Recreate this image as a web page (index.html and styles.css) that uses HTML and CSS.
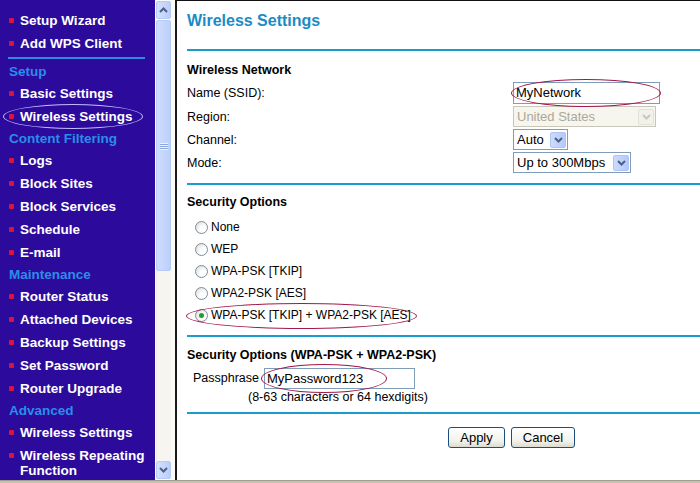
FILE: index.html
```html
<!DOCTYPE html>
<html>
<head>
<title>Wireless Settings</title>
<link rel="stylesheet" href="styles.css">
</head>
<body>
<div class="window">
<div class="frame">

<div class="menu">
<div class="menu-list">
<div class="item"><span class="dot"></span>Setup Wizard</div>
<div class="item"><span class="dot"></span>Add WPS Client</div>
<div class="sep"></div>
<div class="group">Setup</div>
<div class="item"><span class="dot"></span>Basic Settings</div>
<div class="item circled-menu"><span class="dot"></span>Wireless Settings</div>
<div class="group">Content Filtering</div>
<div class="item"><span class="dot"></span>Logs</div>
<div class="item"><span class="dot"></span>Block Sites</div>
<div class="item"><span class="dot"></span>Block Services</div>
<div class="item"><span class="dot"></span>Schedule</div>
<div class="item"><span class="dot"></span>E-mail</div>
<div class="group">Maintenance</div>
<div class="item"><span class="dot"></span>Router Status</div>
<div class="item"><span class="dot"></span>Attached Devices</div>
<div class="item"><span class="dot"></span>Backup Settings</div>
<div class="item"><span class="dot"></span>Set Password</div>
<div class="item"><span class="dot"></span>Router Upgrade</div>
<div class="group">Advanced</div>
<div class="item"><span class="dot"></span>Wireless Settings</div>
<div class="item"><span class="dot"></span>Wireless Repeating Function</div>
</div>

<div class="scroll">
<div class="sb-btn"><svg width="9" height="6" viewBox="0 0 9 6"><path d="M1 5 L4.5 1.5 L8 5" fill="none" stroke="#4d6185" stroke-width="2"/></svg></div>
<div class="sb-thumb">
<svg width="8" height="8" viewBox="0 0 8 8"><path d="M0 1.5h8M0 3.5h8M0 5.5h8M0 7.5h8" stroke="#eef3fe" stroke-width="1"/><path d="M0 2.5h8M0 4.5h8M0 6.5h8" stroke="#8ca7e0" stroke-width="1"/></svg>
</div>
<div class="sb-track"></div>
<div class="sb-btn"><svg width="9" height="6" viewBox="0 0 9 6"><path d="M1 1 L4.5 4.5 L8 1" fill="none" stroke="#4d6185" stroke-width="2"/></svg></div>
</div>
</div>

<div class="main">
<div class="title">Wireless Settings</div>
<div class="rule"></div>

<div class="sec-title first">Wireless Network</div>
<div class="form-row tall">
<span class="lbl">Name (SSID):</span>
<span class="field mark-name"><input class="text name-input" type="text" value="MyNetwork"></span>
</div>
<div class="form-row">
<span class="lbl">Region:</span>
<span class="select disabled region"><span class="sel-text">United States</span><span class="arrow"><svg width="9" height="6" viewBox="0 0 9 6"><path d="M1 1 L4.5 4.5 L8 1" fill="none" stroke="#c9c7ba" stroke-width="2"/></svg></span></span>
</div>
<div class="form-row">
<span class="lbl">Channel:</span>
<span class="select channel"><span class="sel-text">Auto</span><span class="arrow"><svg width="9" height="6" viewBox="0 0 9 6"><path d="M1 1 L4.5 4.5 L8 1" fill="none" stroke="#4d6185" stroke-width="2"/></svg></span></span>
</div>
<div class="form-row">
<span class="lbl">Mode:</span>
<span class="select mode"><span class="sel-text">Up to 300Mbps</span><span class="arrow"><svg width="9" height="6" viewBox="0 0 9 6"><path d="M1 1 L4.5 4.5 L8 1" fill="none" stroke="#4d6185" stroke-width="2"/></svg></span></span>
</div>
<div class="rule rule-mid"></div>

<div class="sec-title second">Security Options</div>
<div class="radios">
<label class="radio-row"><span class="radio"></span>None</label>
<label class="radio-row"><span class="radio"></span>WEP</label>
<label class="radio-row"><span class="radio"></span>WPA-PSK [TKIP]</label>
<label class="radio-row"><span class="radio"></span>WPA2-PSK [AES]</label>
<label class="radio-row mark-radio"><span class="radio checked"></span>WPA-PSK [TKIP] + WPA2-PSK [AES]</label>
</div>
<div class="rule rule-mid"></div>

<div class="sec-title">Security Options (WPA-PSK + WPA2-PSK)</div>
<div class="pass-row">
<span class="pass-lbl">Passphrase</span>
<span class="field mark-pass"><input class="text pass-input" type="text" value="MyPassword123"></span>
</div>
<div class="hint">(8-63 characters or 64 hexdigits)</div>
<div class="rule rule-low"></div>

<div class="buttons">
<button class="btn apply">Apply</button>
<button class="btn cancel">Cancel</button>
</div>
</div>

</div>
<div class="statusbar"></div>
</div>
</body>
</html>
```

FILE: styles.css
```css
body {
margin: 0;
font-family: "Liberation Sans", Arial, sans-serif;
font-size: 13px;
color: #000;
background: #fff;
}

.window {
width: 700px;
height: 483px;
overflow: hidden;
}

.frame {
display: flex;
height: 480px;
}

/* left menu frame */
.menu {
display: flex;
flex: none;
}

.menu-list {
width: 155px;
background-color: #2c0b9c;
padding-top: 9px;
box-sizing: border-box;
}

.item {
display: flex;
padding: 4px 4px 4px 9px;
line-height: 15px;
color: #fff;
font-weight: bold;
font-size: 13.5px;
position: relative;
}

.dot {
flex: none;
width: 5px;
height: 5px;
margin: 5px 6px 0 0;
background-color: #d8153e;
border-radius: 1px;
}

.group {
padding-left: 9px;
height: 21px;
line-height: 21px;
color: #2a8ee8;
font-weight: bold;
font-size: 13.5px;
}

.sep {
height: 2px;
margin: 2px 10px 2px 8px;
background-color: #2c8be0;
}

.circled-menu::after {
content: "";
position: absolute;
left: 3px;
top: -1px;
width: 138px;
height: 23px;
border: 1px solid #c4bcff;
border-radius: 50%;
}

/* xp scrollbar */
.scroll {
width: 20px;
display: flex;
flex-direction: column;
padding: 1px 4px 1px 1px;
box-sizing: border-box;
background-color: #fbfbf7;
}

.sb-btn {
height: 16px;
flex: none;
display: flex;
align-items: center;
justify-content: center;
border: 1px solid #b6cbf5;
border-radius: 2px;
background: linear-gradient(to right, #d5e1fd, #b9cdfa);
}

.sb-thumb {
height: 251px;
flex: none;
margin-top: 1px;
display: flex;
align-items: center;
justify-content: center;
border: 1px solid #b6cbf5;
border-radius: 2px;
box-sizing: border-box;
background: linear-gradient(to right, #cfdcfd, #bcd0fb);
}

.sb-track {
flex: 1;
background-color: #f6f5ef;
border-left: 1px solid #efeee6;
}

/* content frame */
.main {
flex: 1;
border-left: 2px solid #1b1b1b;
border-top: 1px solid #111;
padding-left: 10px;
}

.title {
padding-top: 10px;
height: 20px;
line-height: 20px;
font-size: 16px;
font-weight: bold;
color: #1a8cc4;
}

.rule {
height: 2px;
background-color: #1a9ccd;
margin-top: 18px;
}

.rule-mid {
margin-top: 9px;
}

.rule-low {
margin-top: 7px;
}

.sec-title {
margin-top: 8px;
height: 20px;
line-height: 20px;
font-weight: bold;
font-size: 12.5px;
}

.sec-title.first {
margin-top: 9px;
}

.sec-title.second {
margin-top: 7px;
}

.form-row {
display: grid;
grid-template-columns: 326px auto;
align-items: center;
height: 23px;
}

.form-row.tall {
height: 25px;
}

.form-row .lbl {
font-size: 12.5px;
}

.field {
position: relative;
display: inline-block;
width: max-content;
}

.text {
font-family: "Liberation Sans", Arial, sans-serif;
font-size: 13px;
border: 1px solid #7f9db9;
padding: 0 2px;
box-sizing: border-box;
height: 21px;
margin: 0;
color: #000;
outline: none;
}

.name-input {
width: 147px;
height: 22px;
}

.select {
display: inline-flex;
align-items: center;
justify-content: space-between;
height: 21px;
box-sizing: border-box;
border: 1px solid #7f9db9;
background: #fff;
font-size: 13px;
width: max-content;
}

.sel-text {
padding: 0 4px 0 3px;
}

.arrow {
width: 16px;
height: 16px;
margin-right: 1px;
display: flex;
align-items: center;
justify-content: center;
background: linear-gradient(to right, #cddbfd, #b4c9fa);
border: 1px solid #aec4f4;
box-sizing: border-box;
border-radius: 2px;
}

.region {
width: 143px;
}

.channel {
width: 55px;
}

.mode {
width: 118px;
}

.disabled {
border-color: #c9c7ba;
background: #f6f5ee;
color: #aca899;
}

.disabled .arrow {
background: #f2f1ea;
border-color: #e4e2d8;
}

.mark-name::after,
.mark-radio::after,
.mark-pass::after {
content: "";
position: absolute;
border: 1px solid #a3174c;
border-radius: 50%;
pointer-events: none;
}

.mark-name::after {
left: -2px;
top: -3px;
width: 148px;
height: 26px;
}

/* radios */
.radios {
padding-top: 4px;
}

.radio-row {
display: flex;
align-items: center;
height: 22px;
padding-left: 8px;
font-size: 12px;
position: relative;
width: max-content;
}

.radio {
width: 13px;
height: 13px;
box-sizing: border-box;
border: 1px solid #7d8c9c;
border-radius: 50%;
margin-right: 3px;
background: radial-gradient(circle at 70% 70%, #ffffff 30%, #d7d6cc 100%);
position: relative;
}

.checked::after {
content: "";
position: absolute;
left: 3px;
top: 3px;
width: 5px;
height: 5px;
border-radius: 50%;
background-color: #21a21f;
}

.mark-radio::after {
left: -1px;
top: -1px;
width: 229px;
height: 24px;
}

/* passphrase */
.pass-row {
display: flex;
align-items: center;
height: 22px;
padding-left: 6px;
margin-top: 2px;
}

.pass-lbl {
font-size: 12.5px;
margin-right: 5px;
}

.pass-input {
width: 151px;
height: 21px;
}

.mark-pass::after {
left: -3px;
top: -4px;
width: 124px;
height: 27px;
}

.hint {
padding-left: 61px;
height: 16px;
line-height: 16px;
font-size: 12.5px;
}

.buttons {
display: flex;
gap: 6px;
padding-left: 261px;
margin-top: 13px;
}

.btn {
font-family: "Liberation Sans", Arial, sans-serif;
font-size: 13px;
height: 21px;
padding: 0;
border: 1px solid #1d4f7d;
border-radius: 3px;
background: linear-gradient(#ffffff, #f2f1ea 70%, #dcdad0);
color: #000;
}

.apply {
width: 57px;
}

.cancel {
width: 64px;
}

.statusbar {
height: 3px;
background-color: #c4c1b2;
border-top: 1px solid #a19e90;
box-sizing: border-box;
}
```
